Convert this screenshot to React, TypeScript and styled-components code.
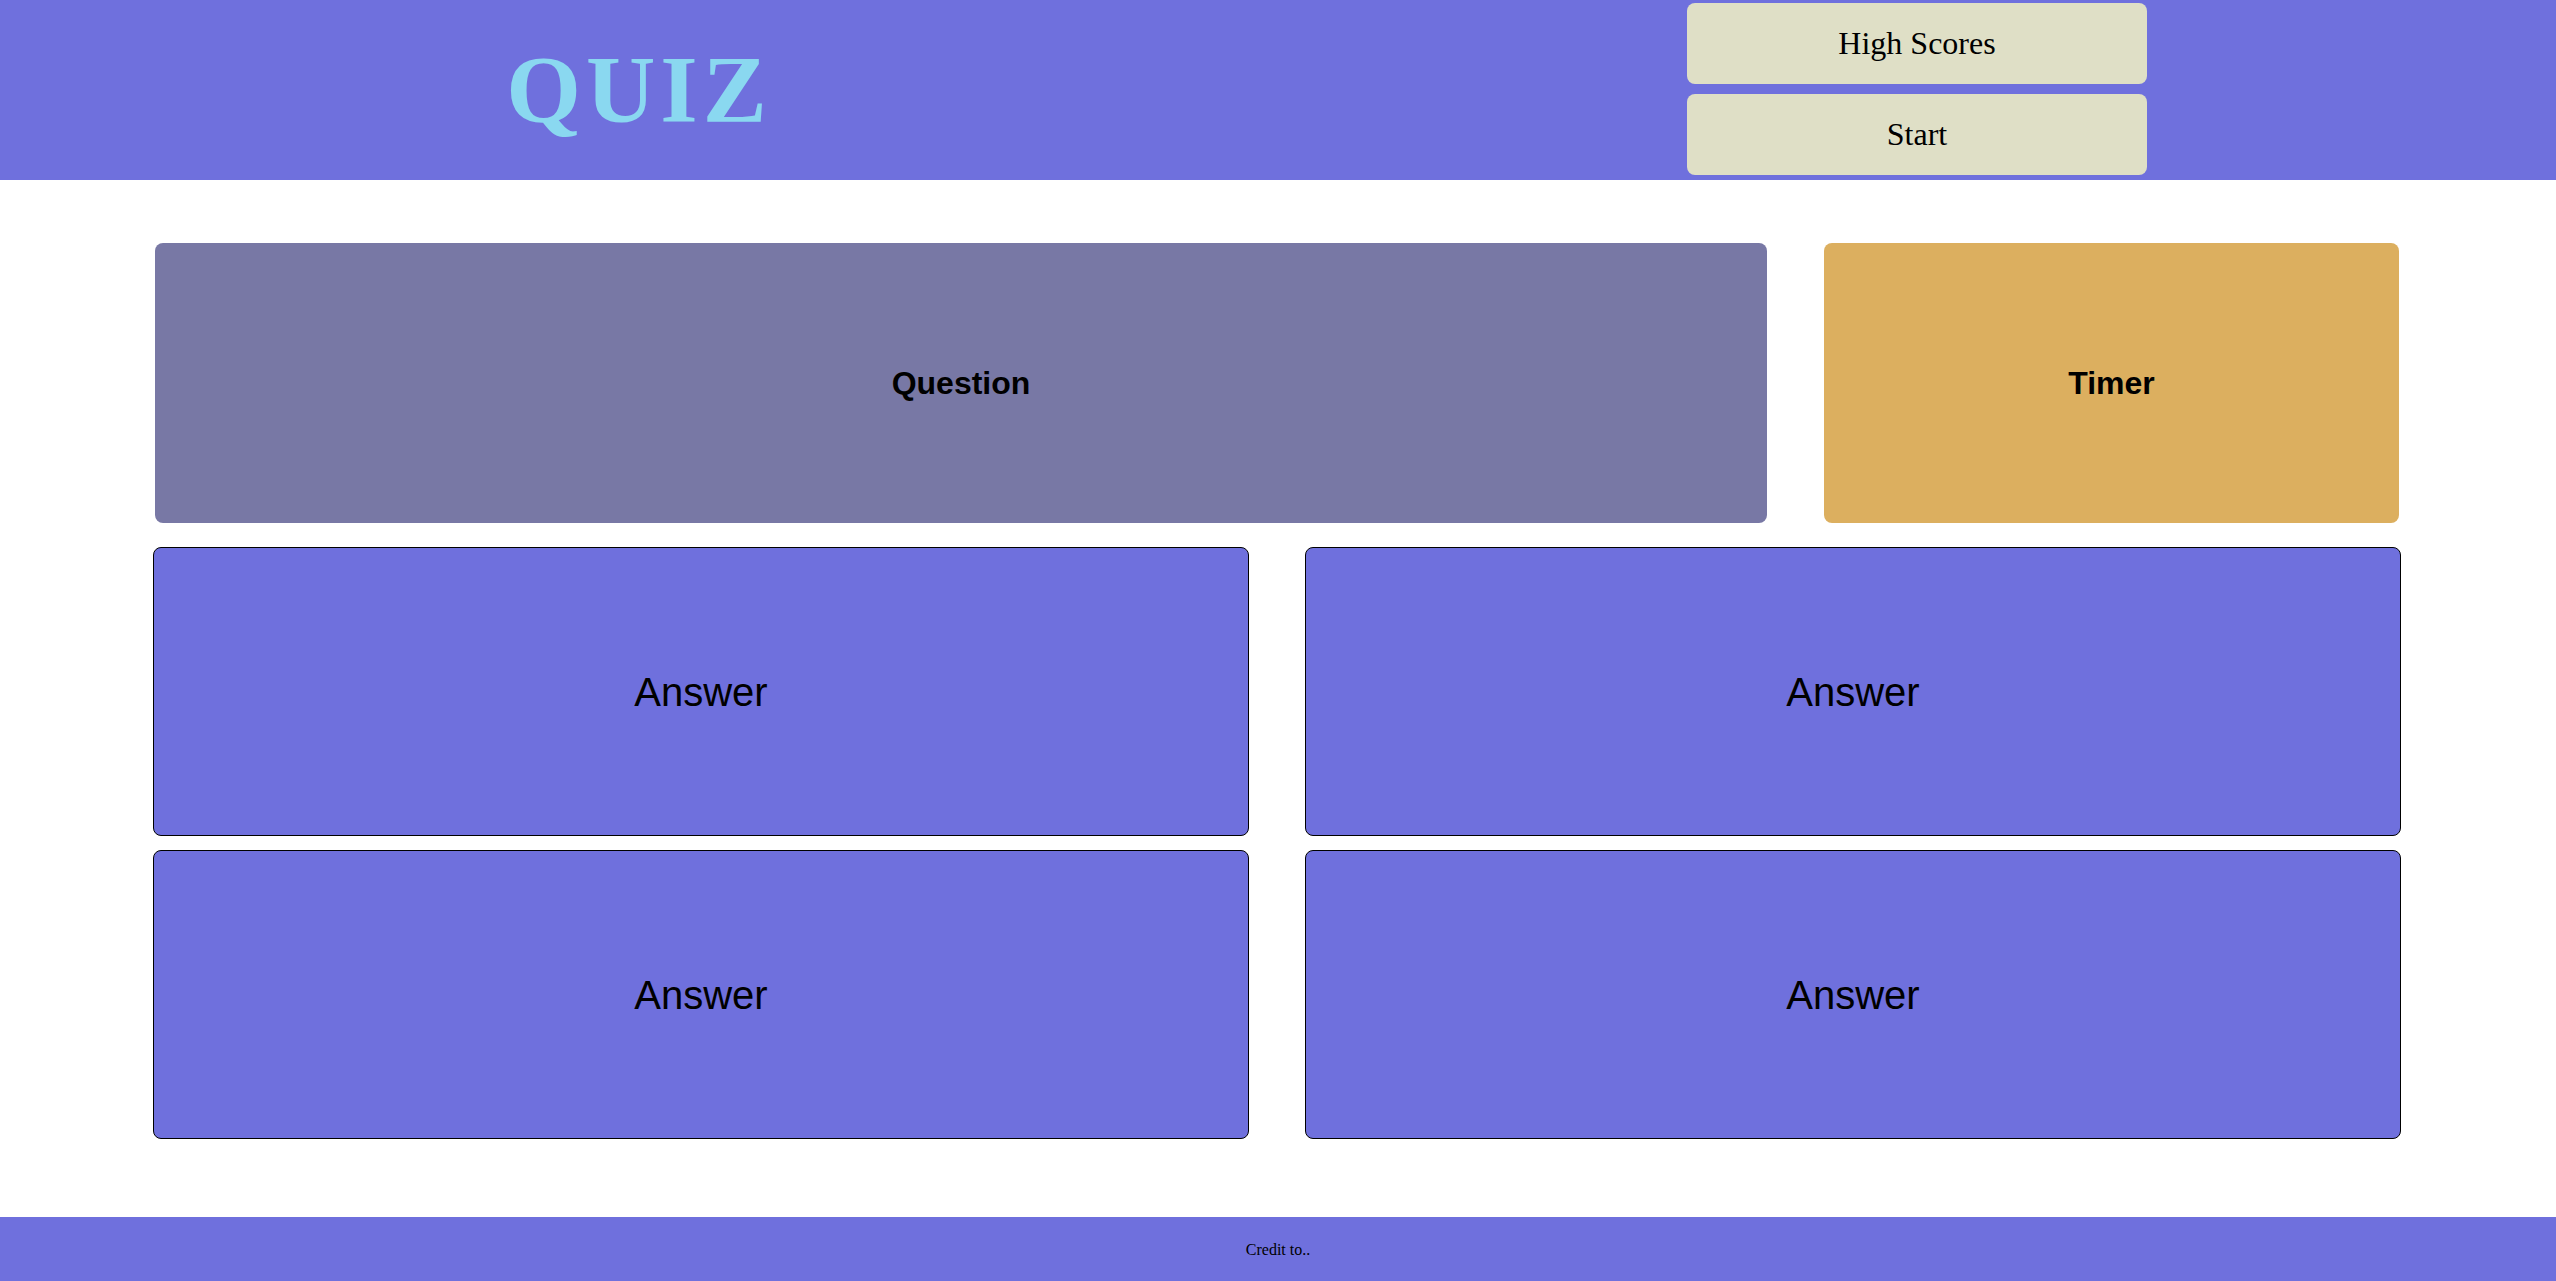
import React from "react";
import styled, { createGlobalStyle } from "styled-components";

const GlobalStyle = createGlobalStyle`
  html, body {
    margin: 0;
    padding: 0;
    background: #ffffff;
    font-family: "Liberation Serif", "Times New Roman", serif;
  }
  * { box-sizing: border-box; }
`;

const Page = styled.div`
  display: flex;
  flex-direction: column;
  min-height: 1281px;
`;

const Header = styled.header`
  display: grid;
  grid-template-columns: 1fr 1fr;
  height: 180px;
  background: #6f70dd;
`;

const TitleCell = styled.div`
  display: flex;
  justify-content: center;
  align-items: flex-start;
`;

const Title = styled.h1`
  margin: 0;
  padding-top: 42px;
  font-family: "Liberation Serif", "Times New Roman", serif;
  font-weight: 700;
  font-size: 96px;
  line-height: 1;
  letter-spacing: 5px;
  color: #8ad8f0;
`;

const NavCell = styled.nav`
  display: flex;
  flex-direction: column;
  align-items: center;
  gap: 10px;
  padding-top: 3px;
`;

const NavButton = styled.button`
  width: 460px;
  height: 81px;
  border: none;
  border-radius: 8px;
  background: #dfdfc6;
  color: #000;
  font-family: "Liberation Serif", "Times New Roman", serif;
  font-size: 32px;
  cursor: pointer;
`;

const Main = styled.main`
  width: 2248px;
  margin: 63px 0 0 153px;
  display: flex;
  flex-direction: column;
  gap: 24px;
`;

const TopRow = styled.div`
  display: flex;
  gap: 57px;
  padding: 0 2px;
  height: 280px;
`;

const Panel = styled.div<{ $bg: string; $w: number }>`
  width: ${(p) => p.$w}px;
  flex: none;
  display: flex;
  align-items: center;
  justify-content: center;
  border-radius: 8px;
  background: ${(p) => p.$bg};
  font-family: "Liberation Sans", Arial, sans-serif;
  font-weight: 700;
  font-size: 32px;
  color: #000;
`;

const AnswerGrid = styled.div`
  display: grid;
  grid-template-columns: 1096px 1096px;
  grid-template-rows: 289px 289px;
  column-gap: 56px;
  row-gap: 14px;
`;

const AnswerButton = styled.button`
  display: flex;
  align-items: center;
  justify-content: center;
  padding-top: 2px;
  border: 1px solid #000;
  border-radius: 8px;
  background: #6f70dd;
  color: #000;
  font-family: "Liberation Sans", Arial, sans-serif;
  font-size: 40px;
  cursor: pointer;
`;

const Footer = styled.footer`
  margin-top: auto;
  height: 64px;
  display: flex;
  align-items: center;
  justify-content: center;
  padding-top: 2px;
  background: #6f70dd;
  font-family: "Liberation Serif", "Times New Roman", serif;
  font-size: 16px;
  color: #000;
`;

export default function App() {
  const answers = ["Answer", "Answer", "Answer", "Answer"];
  return (
    <>
      <GlobalStyle />
      <Page>
        <Header>
          <TitleCell>
            <Title>QUIZ</Title>
          </TitleCell>
          <NavCell>
            <NavButton>High Scores</NavButton>
            <NavButton>Start</NavButton>
          </NavCell>
        </Header>
        <Main>
          <TopRow>
            <Panel $bg="#7878a5" $w={1612}>Question</Panel>
            <Panel $bg="#dcaf5f" $w={575}>Timer</Panel>
          </TopRow>
          <AnswerGrid>
            {answers.map((a, i) => (
              <AnswerButton key={i}>{a}</AnswerButton>
            ))}
          </AnswerGrid>
        </Main>
        <Footer>Credit to..</Footer>
      </Page>
    </>
  );
}
